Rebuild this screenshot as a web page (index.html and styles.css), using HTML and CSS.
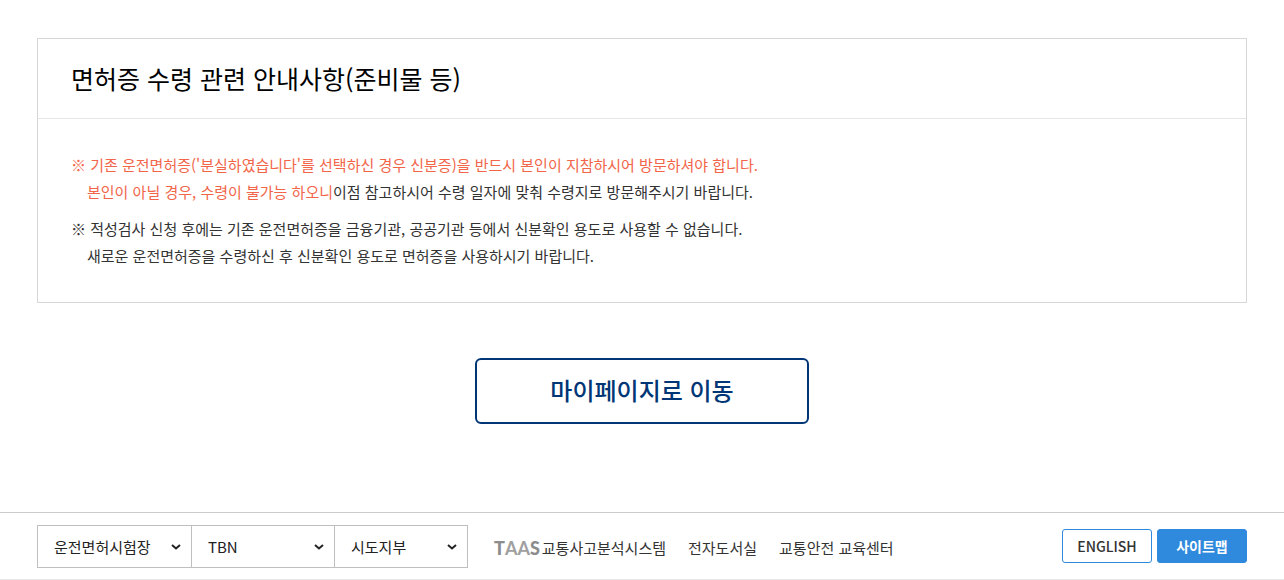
FILE: index.html
```html
<!DOCTYPE html>
<html lang="ko">
<head>
<meta charset="utf-8">
<meta name="viewport" content="width=device-width, initial-scale=1">
<title>면허증 수령 안내</title>
<link rel="stylesheet" href="styles.css">
</head>
<body>
<main class="content">
  <section class="notice">
    <h1 class="notice-title">면허증 수령 관련 안내사항(준비물 등)</h1>
    <div class="notice-body">
      <p class="notice-item"><span class="warn">※ 기존 운전면허증('분실하였습니다'를 선택하신 경우 신분증)을 반드시 본인이 지참하시어 방문하셔야 합니다.<br>본인이 아닐 경우, 수령이 불가능 하오니</span>이점 참고하시어 수령 일자에 맞춰 수령지로 방문해주시기 바랍니다.</p>
      <p class="notice-item">※ 적성검사 신청 후에는 기존 운전면허증을 금융기관, 공공기관 등에서 신분확인 용도로 사용할 수 없습니다.<br>새로운 운전면허증을 수령하신 후 신분확인 용도로 면허증을 사용하시기 바랍니다.</p>
    </div>
  </section>
  <button class="mypage" type="button">마이페이지로 이동</button>
</main>
<footer class="footer">
  <div class="selects">
    <div class="select-box site-exam">
      <select class="site-select" aria-label="운전면허시험장"><option>운전면허시험장</option></select>
      <svg class="arrow" viewBox="0 0 10 6" aria-hidden="true"><path d="M1 1l4 3.5L9 1"/></svg>
    </div>
    <div class="select-box site-tbn">
      <select class="site-select" aria-label="TBN"><option>TBN</option></select>
      <svg class="arrow" viewBox="0 0 10 6" aria-hidden="true"><path d="M1 1l4 3.5L9 1"/></svg>
    </div>
    <div class="select-box site-branch">
      <select class="site-select" aria-label="시도지부"><option>시도지부</option></select>
      <svg class="arrow" viewBox="0 0 10 6" aria-hidden="true"><path d="M1 1l4 3.5L9 1"/></svg>
    </div>
  </div>
  <nav class="links">
    <a class="link" href="#"><span class="taas">T<span class="taas-light">AA</span>S</span>교통사고분석시스템</a>
    <a class="link" href="#">전자도서실</a>
    <a class="link" href="#">교통안전 교육센터</a>
  </nav>
  <div class="actions">
    <a class="action" href="#">ENGLISH</a>
    <a class="action action-filled" href="#">사이트맵</a>
  </div>
</footer>
</body>
</html>
```
FILE: styles.css
```css
* { box-sizing: border-box; }

body {
  margin: 0;
  background: #fff;
  color: #333;
  font-family: "Noto Sans CJK KR", "Noto Sans", sans-serif;
  font-size: 15px;
  line-height: 27px;
}

.content {
  display: flex;
  flex-direction: column;
  align-items: center;
  padding: 38px 37px 88px;
}

.notice {
  width: 100%;
  border: 1px solid #d7d7d7;
}

.notice-title {
  margin: 0;
  padding: 19px 33px 20px;
  border-bottom: 1px solid #e5e5e5;
  color: #000;
  font-size: 25px;
  font-weight: 400;
  line-height: 40px;
}

.notice-body { padding: 32px 33px 33px; }

.notice-item {
  margin: 0 0 10px;
  padding-left: 16px;
  text-indent: -16px;
}

.notice-item:last-child { margin-bottom: 0; }
.warn { color: #f26549; }

.mypage {
  width: 334px;
  height: 66px;
  margin-top: 55px;
  padding: 0 0 4px;
  border: 2px solid #003675;
  border-radius: 6px;
  background: #fff;
  color: #003675;
  font: 500 24px "Noto Sans CJK KR", sans-serif;
  cursor: pointer;
}

.footer {
  display: flex;
  align-items: center;
  padding: 12px 37px 11px;
  border-top: 1px solid #ccc;
  border-bottom: 1px solid #e8e8e8;
}

.selects {
  display: flex;
  border: 1px solid #bfbfbf;
}

.select-box { position: relative; }
.select-box + .select-box { border-left: 1px solid #bfbfbf; }

.site-select {
  appearance: none;
  display: block;
  width: 100%;
  height: 41px;
  padding: 0 16px;
  border: 0;
  border-radius: 0;
  background: #fff;
  color: #222;
  font: 15px "Noto Sans CJK KR", sans-serif;
}

.arrow {
  position: absolute;
  top: 18px;
  right: 10px;
  width: 10px;
  height: 6px;
  fill: none;
  stroke: #222;
  stroke-width: 2;
  pointer-events: none;
}

.site-exam { width: 153px; }
.site-tbn { width: 143px; }
.site-branch { width: 133px; }

.links {
  display: flex;
  align-items: center;
  gap: 22px;
  margin-left: 26px;
  padding-top: 2px;
}

.link {
  display: flex;
  align-items: center;
  gap: 2px;
  color: #333;
  text-decoration: none;
}

.taas {
  padding-top: 2px;
  color: #8c8c8c;
  font: 900 18px/27px Lato, sans-serif;
}

.taas-light {
  color: #a0a0a0;
  font-weight: 700;
}

.actions {
  display: flex;
  gap: 5px;
  margin-left: auto;
  padding-bottom: 2px;
}

.action {
  width: 90px;
  height: 34px;
  border: 1px solid #2f89dc;
  border-radius: 3px;
  color: #333;
  font-size: 14px;
  font-weight: 500;
  line-height: 32px;
  text-align: center;
  text-decoration: none;
}

.action-filled {
  background: #2f89dc;
  color: #fff;
  font-weight: 700;
}
```
